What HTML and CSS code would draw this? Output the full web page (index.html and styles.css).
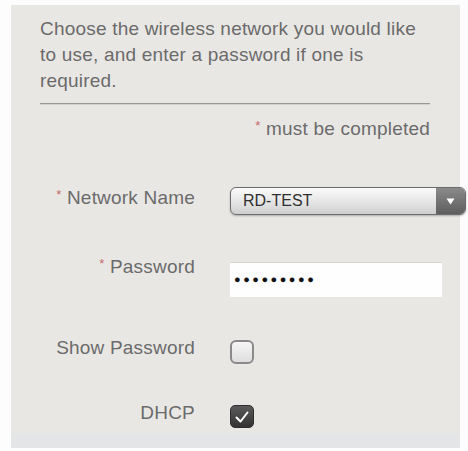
FILE: index.html
```html
<!DOCTYPE html>
<html>
<head>
<meta charset="utf-8">
<link rel="stylesheet" href="styles.css">
</head>
<body>
<div class="panel">
  <p class="intro">Choose the wireless network you would like<br>to use, and enter a password if one is<br>required.</p>
  <div class="rule"></div>
  <p class="required"><span class="star">*</span> must be completed</p>
  <div class="form">
    <div class="row row-select">
      <label class="label"><span class="star">*</span> Network Name</label>
      <div class="select">
        <span class="select-text">RD-TEST</span>
        <span class="select-btn"><svg width="9" height="7" viewBox="0 0 9 7"><path d="M0.5 0.5 H8.5 L4.5 6.5 Z" fill="#fff"/></svg></span>
      </div>
    </div>
    <div class="row row-input">
      <label class="label label-top"><span class="star">*</span> Password</label>
      <div class="input">&#9679;&#9679;&#9679;&#9679;&#9679;&#9679;&#9679;&#9679;&#9679;</div>
    </div>
    <div class="row row-check">
      <label class="label">Show Password</label>
      <span class="check"></span>
    </div>
    <div class="row row-check2">
      <label class="label">DHCP</label>
      <span class="check checked"><svg width="16" height="14" viewBox="0 0 16 14"><path d="M2.5 7.5 L6.5 11.5 L13.5 2.5" fill="none" stroke="#fff" stroke-width="2" stroke-linecap="round" stroke-linejoin="round"/></svg></span>
    </div>
  </div>
  <div class="foot"></div>
</div>
</body>
</html>
```

FILE: styles.css
```css
html, body {
  margin: 0;
  padding: 0;
  background: #fdfdfd;
}
body {
  font-family: "Liberation Sans", Arial, sans-serif;
  color: #6b6b6b;
}
.panel {
  margin: 5px 8px 3px 11px;
  background: #e9e7e4;
  padding: 11px 0 0 29px;
  height: 443px;
  box-sizing: border-box;
  position: relative;
  display: flex;
  flex-direction: column;
}
.intro {
  margin: 0;
  font-size: 19px;
  line-height: 26px;
  letter-spacing: 0.2px;
}
.rule {
  margin-top: 9px;
  width: 390px;
  height: 1px;
  background: #9a9896;
  border-bottom: 1px solid #d4d2cf;
}
.required {
  margin: 13px 0 0 0;
  width: 390px;
  text-align: right;
  font-size: 19px;
  line-height: 22px;
  letter-spacing: 0.2px;
}
.star {
  color: #c76a6a;
  font-size: 13px;
  line-height: 0;
  vertical-align: 5px;
}
.form {
  margin-top: 47px;
  display: flex;
  flex-direction: column;
}
.row {
  display: grid;
  grid-template-columns: 155px auto;
  column-gap: 35px;
  align-items: center;
}
.label {
  text-align: right;
  font-size: 19px;
  line-height: 20px;
  letter-spacing: 0.2px;
  margin-bottom: 7px;
}
.label-top {
  align-self: start;
  margin-top: -5px;
  margin-bottom: 0;
}
.select {
  width: 236px;
  height: 28px;
  box-sizing: border-box;
  border: 1px solid #6c6c6c;
  border-radius: 6px;
  background: linear-gradient(#fbfbfb, #e2e2e2 60%, #cfcfcf);
  box-shadow: 0 1px 2px rgba(0,0,0,0.25);
  display: flex;
  align-items: center;
  overflow: hidden;
}
.select-text {
  flex: 1;
  padding-left: 12px;
  color: #2f2f2f;
  font-size: 16px;
}
.select-btn {
  width: 29px;
  align-self: stretch;
  background: linear-gradient(#8a8a8a, #5e5e5e);
  display: flex;
  align-items: center;
  justify-content: center;
}
.row-input {
  margin-top: 47px;
}
.input {
  width: 212px;
  height: 35px;
  box-sizing: border-box;
  background: #fefefe;
  border-top: 1px solid #d7d5d2;
  padding: 6px 0 0 4px;
  font-size: 11px;
  letter-spacing: 2.5px;
  color: #111;
  line-height: 20px;
}
.row-check {
  margin-top: 41px;
}
.row-check2 {
  margin-top: 38px;
}
.check {
  width: 24px;
  height: 24px;
  box-sizing: border-box;
  border: 2px solid #8a8a8a;
  border-radius: 6px;
  background: linear-gradient(#f6f6f6, #dedede);
  display: flex;
  align-items: center;
  justify-content: center;
}
.check.checked {
  width: 24px;
  height: 23px;
  border: 1px solid #2e2e2e;
  background: linear-gradient(#5a5a5a, #333);
  border-radius: 5px;
}
.foot {
  position: absolute;
  left: 0;
  right: 0;
  bottom: 0;
  height: 15px;
  background: #e4e5e7;
}
```
